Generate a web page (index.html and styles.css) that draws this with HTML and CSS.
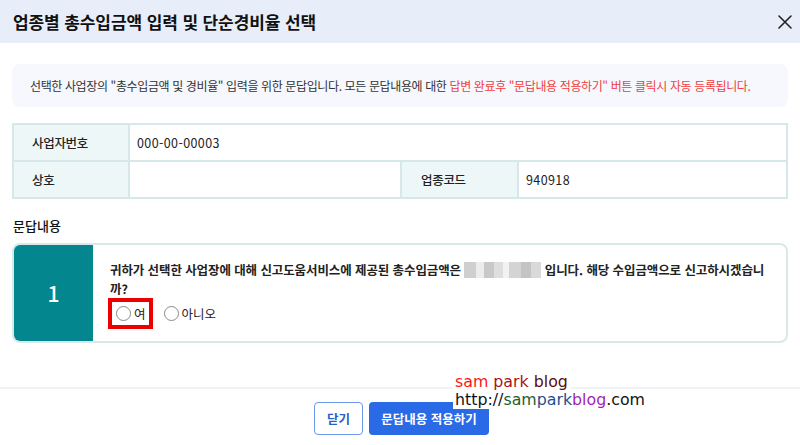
FILE: index.html
```html
<!DOCTYPE html>
<html lang="ko">
<head>
<meta charset="utf-8">
<title>업종별 총수입금액 입력 및 단순경비율 선택</title>
<link rel="stylesheet" href="styles.css">
</head>
<body>
<div class="modal">
  <div class="modal-header">
    <h1 class="modal-title">업종별 총수입금액 입력 및 단순경비율 선택</h1>
    <button class="close-btn" aria-label="닫기">
      <svg width="16" height="16" viewBox="0 0 16 16"><path d="M2 2 L14 14 M14 2 L2 14" stroke="#222" stroke-width="1.6" fill="none" stroke-linecap="round"/></svg>
    </button>
  </div>
  <div class="modal-body">
    <div class="notice">선택한 사업장의 "총수입금액 및 경비율" 입력을 위한 문답입니다. 모든 문답내용에 대한 <span class="notice-red">답변 완료후 "문답내용 적용하기" 버튼 클릭시 자동 등록됩니다.</span></div>

    <table class="info-table">
      <tr>
        <th class="th-first">사업자번호</th>
        <td colspan="3">000-00-00003</td>
      </tr>
      <tr>
        <th class="th-first">상호</th>
        <td class="td-name"></td>
        <th class="th-code">업종코드</th>
        <td>940918</td>
      </tr>
    </table>

    <h2 class="section-title">문답내용</h2>

    <div class="qa-card">
      <div class="qa-num">1</div>
      <div class="qa-content">
        <p class="qa-text">귀하가 선택한 사업장에 대해 신고도움서비스에 제공된 총수입금액은 <span class="blur-amount"><i class="b1"></i><i class="b2"></i><i class="b3"></i><i class="b4"></i><i class="b5"></i><i class="b6"></i><i class="b7"></i><i class="b8"></i></span> 입니다. 해당 수입금액으로 신고하시겠습니까?</p>
        <div class="radio-row">
          <label class="radio-opt highlighted"><span class="radio-circle"></span>여</label>
          <label class="radio-opt"><span class="radio-circle"></span>아니오</label>
        </div>
      </div>
    </div>
  </div>
  <div class="modal-footer">
    <button class="btn btn-outline">닫기</button>
    <button class="btn btn-primary">문답내용 적용하기</button>
  </div>
  <div class="watermark">
    <span class="wm-line"><span class="c-red">sam</span> <span class="c-dred">park</span> <span class="c-brown">blog</span></span>
    <span class="wm-line">http://<span class="c-green">sam</span><span class="c-teal">park</span><span class="c-purple">blog</span>.com</span>
  </div>
</div>
</body>
</html>
```
FILE: styles.css
```css
* { box-sizing: border-box; }
html, body { margin: 0; padding: 0; background: #fff; }
body {
  font-family: "Noto Sans CJK KR", "Noto Sans", sans-serif;
  color: #222;
}
.modal {
  position: relative;
  width: 800px;
  height: 445px;
  background: #fff;
  overflow: hidden;
}
.modal-header {
  height: 43px;
  background: #e8eef9;
  display: flex;
  align-items: center;
  justify-content: space-between;
  padding: 0 6px 0 13px;
}
.modal-title {
  margin: 0;
  font-size: 17px;
  font-weight: 700;
  color: #111;
  letter-spacing: -0.1px;
}
.close-btn {
  border: 0;
  background: transparent;
  padding: 0;
  width: 18px;
  height: 18px;
  display: flex;
  align-items: center;
  justify-content: center;
  margin-top: 1px;
}
.modal-body {
  padding: 21px 12px 0;
}
.notice {
  height: 43px;
  background: #f6f8fd;
  border-radius: 8px;
  padding: 0 18px;
  display: flex;
  align-items: center;
  font-size: 12px;
  color: #333;
  white-space: nowrap;
  letter-spacing: -0.38px;
}
.notice-red { color: #f03e3e; margin-left: 3px; }
.info-table {
  margin-top: 16px;
  width: 100%;
  border-collapse: collapse;
  font-size: 12.5px;
  color: #222;
}
.info-table th, .info-table td {
  border: 2px solid #d6e8ea;
  height: 37px;
  text-align: left;
  padding: 0 7px;
  font-weight: 400;
}
.info-table td { letter-spacing: 0.4px; }
.info-table th {
  background: #eef7f8;
  font-weight: 500;
  letter-spacing: -0.3px;
}
.th-first { width: 116px; padding-left: 18px !important; }
.td-name { width: 272px; }
.th-code { width: 117px; padding-left: 19px !important; }
.section-title {
  margin: 18px 0 8px 1px;
  font-size: 13px;
  font-weight: 500;
  line-height: 18px;
  color: #111;
}
.qa-card {
  display: flex;
  height: 100px;
  border: 2px solid #d9e9ea;
  border-radius: 8px;
  overflow: hidden;
}
.qa-num {
  width: 81px;
  margin: -2px 0 -2px -2px;
  background: #03868e;
  color: #fff;
  font-size: 21px;
  font-weight: 500;
  display: flex;
  align-items: center;
  justify-content: center;
  border-radius: 8px 0 0 8px;
  padding-left: 2px;
}
.qa-content {
  flex: 1;
  padding: 15px 10px 0 17px;
}
.qa-text {
  margin: 0;
  font-size: 12.5px;
  font-weight: 700;
  line-height: 19px;
  color: #222;
  letter-spacing: -0.1px;
}
.blur-amount {
  display: inline-flex;
  vertical-align: -3px;
  height: 16px;
  width: 77px;
  background: #f2f2f2;
}
.blur-amount i { display: block; height: 100%; }
.blur-amount .b1 { width: 12px; background: #cfcfcf; }
.blur-amount .b2 { width: 8px; background: #ececec; }
.blur-amount .b3 { width: 10px; background: #c8c8c8; }
.blur-amount .b4 { width: 9px; background: #dedede; }
.blur-amount .b5 { width: 6px; background: #f2f2f2; }
.blur-amount .b6 { width: 12px; background: #d4d4d4; }
.blur-amount .b7 { width: 10px; background: #c4c4c4; }
.blur-amount .b8 { width: 10px; background: #d9d9d9; }
.radio-row {
  display: flex;
  align-items: center;
  margin-top: 0;
  margin-left: -2px;
  gap: 11px;
}
.radio-opt {
  display: inline-flex;
  align-items: center;
  font-size: 12.5px;
  color: #222;
  gap: 3px;
  height: 31px;
}
.radio-opt.highlighted {
  border: 4px solid #ee0000;
  padding: 0 3px 0 4px;
}
.radio-circle {
  width: 15px;
  height: 15px;
  border: 1px solid #8a8a8a;
  border-radius: 50%;
  background: #fff;
  display: inline-block;
}
.modal-footer {
  position: absolute;
  left: 0;
  right: 0;
  top: 387px;
  border-top: 2px solid #eef3f8;
  display: flex;
  justify-content: center;
  gap: 6px;
  padding-top: 13px;
  padding-left: 3px;
}
.btn {
  height: 33px;
  border-radius: 4px;
  font-family: inherit;
  font-size: 12.5px;
  font-weight: 700;
  padding: 0 10px;
}
.btn-outline {
  width: 49px;
  background: #fff;
  border: 1.5px solid #6b98ea;
  color: #2b5fc8;
}
.btn-primary {
  width: 120px;
  background: #2a6ae6;
  border: 0;
  color: #fff;
}
.watermark {
  position: absolute;
  left: 453px;
  top: 373px;
  display: flex;
  flex-direction: column;
  align-items: flex-start;
  font-family: "DejaVu Sans", sans-serif;
  font-size: 15.8px;
  line-height: 18px;
  color: #111;
}
.wm-line { background: #fff; padding: 0 3px 0 2px; white-space: nowrap; }
.c-red { color: #ff1515; }
.c-dred { color: #a8141a; }
.c-brown { color: #5a0a0a; }
.c-green { color: #1d5e2c; }
.c-teal { color: #1e5090; }
.c-purple { color: #a21fb8; }
```
